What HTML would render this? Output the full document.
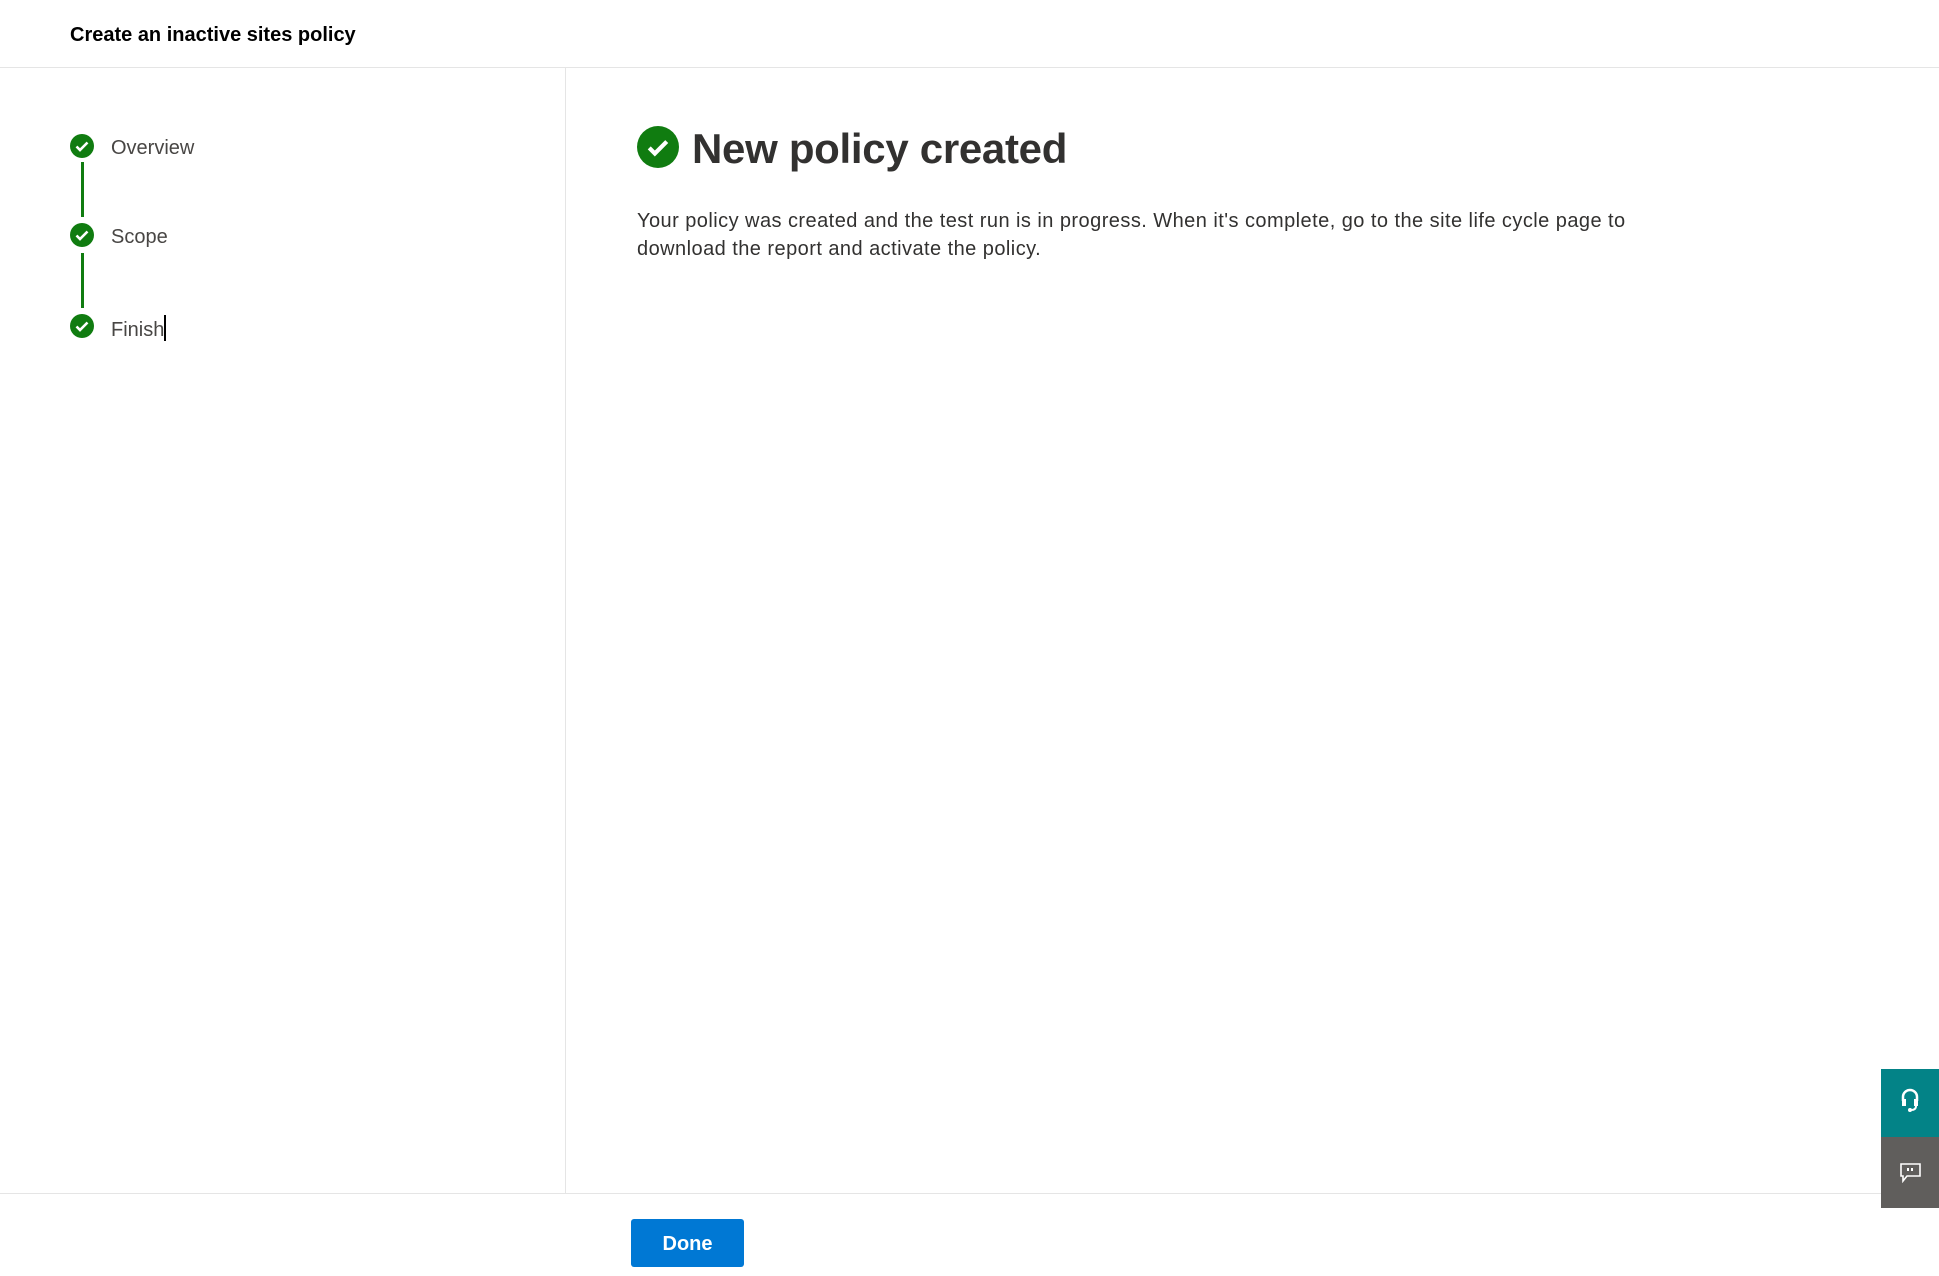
<!DOCTYPE html>
<html><head><meta charset="utf-8"><style>
body{margin:0;width:1939px;height:1276px;position:relative;background:#fff;font-family:"Liberation Sans",sans-serif;overflow:hidden;color:#323130}
.abs{position:absolute}
.title{left:70px;top:24px;font-size:20px;font-weight:bold;color:#000;letter-spacing:0px}
.hline{left:0;top:67px;width:1939px;height:1px;background:#e5e5e5}
.vline{left:565px;top:68px;width:1px;height:1125px;background:#e5e5e5}
.fline{left:0;top:1193px;width:1881px;height:1px;background:#e5e5e5}
.step{left:70px;width:24px;height:24px}
.lbl{left:111px;font-size:20px;color:#484644}
.conn{left:81px;width:3px;background:#107c10}
.para{left:637px;top:207px;width:1060px;font-size:20px;line-height:28px;color:#323130;letter-spacing:0.45px}
.btn{left:631px;top:1219px;width:113px;height:48px;background:#0078d4;border-radius:3px;color:#fff;font-weight:bold;font-size:20px;text-align:center;line-height:50px}
</style></head><body>
<div class="abs title">Create an inactive sites policy</div>
<div class="abs hline"></div>
<div class="abs vline"></div>
<div class="abs fline"></div>

<svg class="abs step" style="top:134px" viewBox="0 0 24 24"><circle cx="12" cy="12" r="12" fill="#107c10"/><path d="M6.5 12.5l3.5 3.5 7.5-7.5" stroke="#fff" stroke-width="2.6" fill="none"/></svg>
<div class="abs lbl" style="top:137px">Overview</div>
<div class="abs conn" style="top:162px;height:55px"></div>
<svg class="abs step" style="top:223px" viewBox="0 0 24 24"><circle cx="12" cy="12" r="12" fill="#107c10"/><path d="M6.5 12.5l3.5 3.5 7.5-7.5" stroke="#fff" stroke-width="2.6" fill="none"/></svg>
<div class="abs lbl" style="top:226px">Scope</div>
<div class="abs conn" style="top:253px;height:55px"></div>
<svg class="abs step" style="top:314px" viewBox="0 0 24 24"><circle cx="12" cy="12" r="12" fill="#107c10"/><path d="M6.5 12.5l3.5 3.5 7.5-7.5" stroke="#fff" stroke-width="2.6" fill="none"/></svg>
<div class="abs lbl" style="top:315px">Finish<span style="display:inline-block;width:2px;height:26px;background:#000;vertical-align:-5px"></span></div>

<svg class="abs" style="left:637px;top:126px;width:42px;height:42px" viewBox="0 0 24 24"><circle cx="12" cy="12" r="12" fill="#107c10"/><path d="M7 12.5l3.2 3.2 6.8-6.8" stroke="#fff" stroke-width="2.4" fill="none"/></svg>
<div class="abs" style="left:692px;top:125px;font-size:42px;font-weight:bold;color:#323130;letter-spacing:-0.3px">New policy created</div>
<div class="abs para">Your policy was created and the test run is in progress. When it's complete, go to the site life cycle page to download the report and activate the policy.</div>

<div class="abs btn">Done</div>

<div class="abs" style="left:1881px;top:1069px;width:58px;height:68px;background:#038387"></div>
<svg class="abs" style="left:1900px;top:1088px;width:20px;height:26px" viewBox="0 0 20 26"><path d="M3 13V9a7 7 0 0 1 14 0v4" stroke="#fff" stroke-width="2.5" fill="none"/><rect x="2" y="11" width="4" height="7" fill="#fff"/><rect x="14" y="11" width="4" height="7" fill="#fff"/><path d="M16 18q0 4-5 4" stroke="#fff" stroke-width="2" fill="none"/><circle cx="10" cy="22" r="2" fill="#fff"/></svg>
<div class="abs" style="left:1881px;top:1137px;width:58px;height:71px;background:#605e5c"></div>
<svg class="abs" style="left:1900px;top:1163px;width:21px;height:20px" viewBox="0 0 21 20"><path d="M1 1h19v12H7l-4 5v-5H1z" stroke="#fff" stroke-width="1.6" fill="none"/><rect x="7" y="5" width="2" height="3" fill="#fff"/><rect x="11" y="5" width="2" height="3" fill="#fff"/></svg>
</body></html>
